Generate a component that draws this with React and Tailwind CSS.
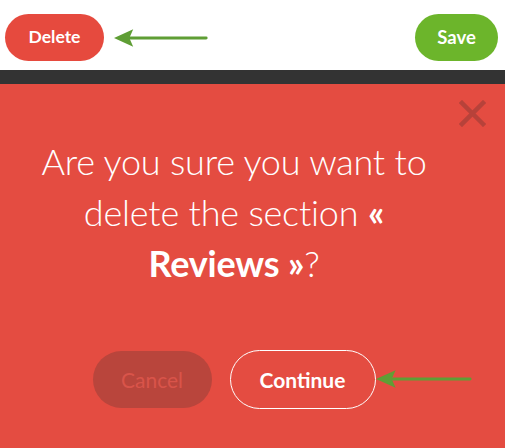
import React from "react";

function Arrow({ className }) {
  return (
    <svg className={className} width="100" height="20" viewBox="0 0 100 20">
      <line x1="14" y1="10" x2="96" y2="10" stroke="#5f9e35" strokeWidth="3" strokeLinecap="round" />
      <polygon points="0,10 20,1 16,10 20,19" fill="#5f9e35" />
    </svg>
  );
}

export default function App() {
  return (
    <div className="w-[505px] h-[448px] overflow-hidden bg-white" style={{ fontFamily: "Lato, 'Open Sans', sans-serif" }}>
      <div className="h-[70px] pt-[5px] flex items-center justify-between px-[5px]">
        <div className="flex items-center">
          <button className="w-[99px] h-[47px] rounded-full bg-[#e64a3e] text-white font-bold text-[17.5px]">Delete</button>
          <Arrow className="ml-[10px] w-[96px]" />
        </div>
        <button className="w-[83px] h-[47px] rounded-full bg-[#6cb52b] text-white font-bold text-[18.5px] mr-[2px]">Save</button>
      </div>
      <div className="h-[14px] bg-[#333333]" />
      <div className="h-[364px] bg-[#e44c41] relative flex flex-col items-center pr-[37px]">
        <svg className="absolute right-[19px] top-[16px]" width="27" height="27" viewBox="0 0 27 27">
          <path d="M3 3 L24 24 M24 3 L3 24" stroke="#b7423a" strokeWidth="4.5" strokeLinecap="square" />
        </svg>
        <p className="mt-[52px] text-white text-[36px] font-light leading-[51px] text-center tracking-[-0.2px]">
          Are you sure you want to<br />
          delete the section <b className="font-bold">«</b><br />
          <b className="font-bold">Reviews »</b>?
        </p>
        <div className="mt-[61px] flex items-center gap-[18px] relative">
          <button className="w-[119px] h-[57px] rounded-full bg-[#b9453c] text-[#d9544a] text-[21px]">Cancel</button>
          <button className="w-[146px] h-[59px] rounded-full border border-white text-white font-bold text-[21px]">Continue</button>
          <Arrow className="absolute left-[283px] top-[19px] w-[98px]" />
        </div>
      </div>
    </div>
  );
}
